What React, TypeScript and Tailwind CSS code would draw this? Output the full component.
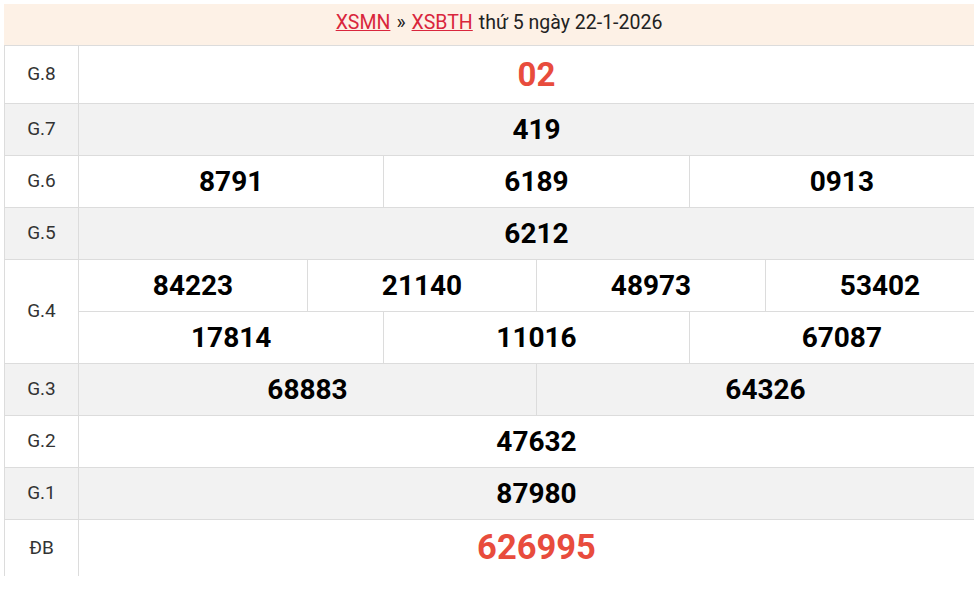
import React from 'react'

type Row = {
    label: string
    cells: string[][]
    gray?: boolean
    big?: boolean
    red?: boolean
}

const rows: Row[] = [
    { label: 'G.8', cells: [['02']], big: true, red: true },
    { label: 'G.7', cells: [['419']], gray: true },
    { label: 'G.6', cells: [['8791', '6189', '0913']] },
    { label: 'G.5', cells: [['6212']], gray: true },
    { label: 'G.4', cells: [['84223', '21140', '48973', '53402'], ['17814', '11016', '67087']] },
    { label: 'G.3', cells: [['68883', '64326']], gray: true },
    { label: 'G.2', cells: [['47632']] },
    { label: 'G.1', cells: [['87980']], gray: true },
    { label: 'ĐB', cells: [['626995']], big: true, red: true },
]

const App = () => {
    return (
        <div className="h-[605px] w-[974px] overflow-hidden bg-white font-['Roboto',sans-serif]">
            <div className="ml-1 mt-1 w-[990px]">
                {/* Header */}
                <div className="flex h-[42px] items-center justify-center border-b border-[#dcdcdc] bg-[#fdf1e6] pb-[3px] text-[19.5px] text-[#222]">
                    <a href="#" className="text-[#d9263c] underline">XSMN</a>
                    <span className="mx-[6px]">»</span>
                    <a href="#" className="text-[#d9263c] underline">XSBTH</a>
                    <span className="ml-[6px]">thứ 5 ngày 22-1-2026</span>
                </div>

                {rows.map((row, ri) => {
                    const last = ri === rows.length - 1
                    const rowH = row.big ? (last ? 'h-[56px]' : 'h-[57px]') : 'h-[51px]'
                    return (
                        <div
                            key={row.label}
                            className={`flex border-l border-[#dcdcdc] ${last ? '' : 'border-b'} ${row.gray ? 'bg-[#f2f2f2]' : 'bg-white'}`}
                        >
                            <div className="flex w-[74px] shrink-0 items-center justify-center border-r border-[#dcdcdc] text-[19px] text-[#333]">
                                {row.label}
                            </div>
                            <div className="flex flex-1 flex-col">
                                {row.cells.map((line, li) => (
                                    <div
                                        key={li}
                                        className={`flex ${li < row.cells.length - 1 ? 'h-[52px] border-b border-[#dcdcdc]' : rowH}`}
                                    >
                                        {line.map((n, ci) => (
                                            <div
                                                key={ci}
                                                className={`flex flex-1 items-center justify-center font-bold ${ci > 0 ? 'border-l border-[#dcdcdc]' : ''} ${row.red ? 'text-[#e84c3d]' : 'text-black'} ${row.label === 'ĐB' ? 'text-[34.5px]' : row.big ? 'text-[33px]' : 'text-[28px]'}`}
                                            >
                                                {n}
                                            </div>
                                        ))}
                                    </div>
                                ))}
                            </div>
                        </div>
                    )
                })}
            </div>
        </div>
    )
}

export default App
